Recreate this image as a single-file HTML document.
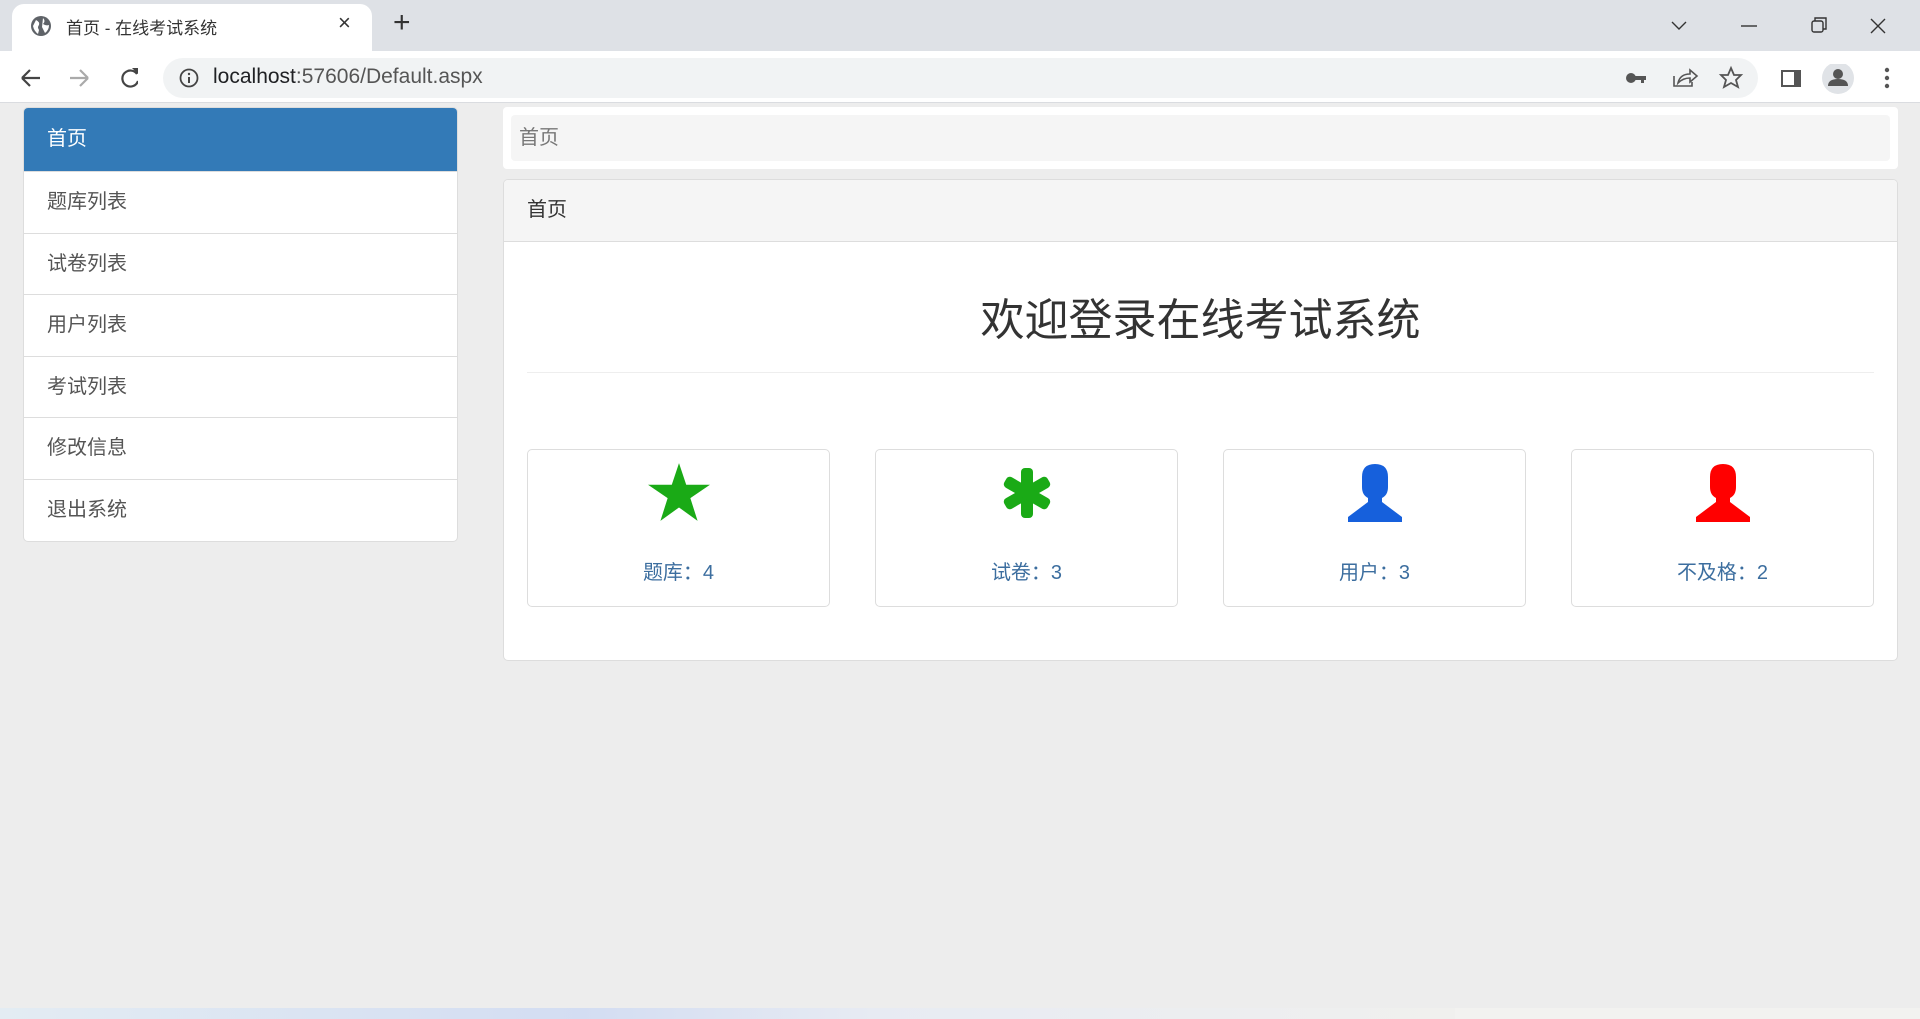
<!DOCTYPE html>
<html><head><meta charset="utf-8"><style>
*{margin:0;padding:0;box-sizing:border-box}
body{width:1920px;height:1019px;overflow:hidden;background:#ededed;font-family:"Liberation Sans","Noto Sans CJK SC",sans-serif;position:relative}
.abs{position:absolute}
.tabbar{left:0;top:0;width:1920px;height:51px;background:#dee1e6}
.tab{left:12px;top:4px;width:360px;height:47px;background:#fff;border-radius:12px 12px 0 0}
.toolbar{left:0;top:51px;width:1920px;height:52px;background:#fff;border-bottom:1px solid #dadce0}
.omni{left:163px;top:58px;width:1595px;height:40px;background:#f1f3f4;border-radius:20px}
.side{left:23px;top:107px;width:435px;background:#fff;border:1px solid #ddd;border-radius:5px;overflow:hidden}
.side div{height:61.6px;line-height:60px;padding-left:23px;font-size:20px;color:#555;border-top:1px solid #ddd}
.side div.act{background:#337ab7;color:#fff;border-top:none;height:63px;line-height:62px}
.bc{left:503px;top:107px;width:1395px;height:62px;background:#fff;border-radius:4px}
.bc div{position:absolute;left:8px;top:8px;right:8px;bottom:8px;background:#f5f5f5;border-radius:4px;font-size:20px;color:#777;line-height:46px;padding-left:8px}
.panel{left:503px;top:179px;width:1395px;height:482px;background:#fff;border:1px solid #ddd;border-radius:5px;overflow:hidden}
.ph{height:62px;background:#f5f5f5;border-bottom:1px solid #ddd;font-size:20px;color:#333;line-height:60px;padding-left:23px}
.card{top:449px;width:303px;height:158px;background:#fff;border:1px solid #ddd;border-radius:5px;text-align:center}
.card svg{position:absolute;left:50%;top:12px;transform:translateX(-50%)}
.card span{position:absolute;left:0;right:0;top:106px;font-size:20px;color:#3c6e9f}
</style></head><body>
<div class="abs tabbar"></div>
<div class="abs tab"></div>
<svg class="abs" style="left:30px;top:15px" width="22" height="22" viewBox="0 0 22 22"><circle cx="11" cy="11" r="10" fill="#5f6368"/><path d="M6 5 Q10 7 9 10 Q7 12 9 15 L8 19 Q4 16 3 11Z M13 3 Q16 6 13 9 Q16 11 19 10 Q19 15 15 18 Q13 14 12 12Z" fill="#fff"/></svg>
<div class="abs" style="left:66px;top:14px;font-size:17px;color:#333">首页 - 在线考试系统</div>
<div class="abs" style="left:338px;top:10px;font-size:22px;color:#333">×</div>
<div class="abs" style="left:393px;top:6px;font-size:30px;color:#333">+</div>
<svg class="abs" style="left:1670px;top:14px" width="220" height="24"><path d="M2 8 L9 15 L16 8" stroke="#333" fill="none" stroke-width="1.4"/><path d="M71 12 H87" stroke="#333" stroke-width="1.4"/><rect x="142" y="7" width="11" height="11" rx="2" stroke="#333" fill="none" stroke-width="1.4"/><path d="M145 7 V4 H156 V15 H153" stroke="#333" fill="none" stroke-width="1.4"/><path d="M211 5 L225 19 M225 5 L211 19" stroke="#333" stroke-width="1.4" transform="translate(-10,0)"/></svg>
<div class="abs toolbar"></div>
<svg class="abs" style="left:18px;top:64px" width="120" height="28"><path d="M4 14 H22 M4 14 L12 6 M4 14 L12 22" stroke="#444" stroke-width="2.2" fill="none"/><path d="M52 14 H70 M70 14 L62 6 M70 14 L62 22" stroke="#aaa" stroke-width="2.2" fill="none"/><path d="M119 10 A8 8 0 1 0 120 17" stroke="#444" stroke-width="2.2" fill="none"/><path d="M114 4 L121 4 L121 11Z" fill="#444"/></svg>
<div class="abs omni"></div>
<svg class="abs" style="left:178px;top:67px" width="22" height="22"><circle cx="11" cy="11" r="8.5" stroke="#444" stroke-width="1.8" fill="none"/><path d="M11 10 V16" stroke="#444" stroke-width="2"/><circle cx="11" cy="7" r="1.2" fill="#444"/></svg>
<div class="abs" style="left:213px;top:65px;font-size:21px;color:#202124">localhost<span style="color:#555">:57606/Default.aspx</span></div>
<svg class="abs" style="left:1620px;top:64px" width="300" height="30"><circle cx="11" cy="14" r="5" fill="#555"/><rect x="14" y="12" width="12" height="4" fill="#555"/><rect x="21" y="14" width="3" height="5" fill="#555"/><path d="M54 12 V22 H72 V18 M58 19 Q60 10 70 10 L70 6 L77 12 L70 18 L70 14 Q63 14 58 19Z" stroke="#555" stroke-width="1.6" fill="none"/><path d="M111 4 L114 11 L121 11 L116 16 L118 23 L111 19 L104 23 L106 16 L101 11 L108 11Z" stroke="#555" stroke-width="1.8" fill="none"/><rect x="161" y="6" width="20" height="17" fill="#555"/><rect x="163" y="8" width="11" height="13" fill="#fff"/><circle cx="218" cy="14" r="16" fill="#e0e3e7"/><circle cx="218" cy="10" r="5" fill="#555"/><path d="M208 22 Q208 15 218 15 Q228 15 228 22Z" fill="#555"/><circle cx="267" cy="6" r="2.2" fill="#555"/><circle cx="267" cy="14" r="2.2" fill="#555"/><circle cx="267" cy="22" r="2.2" fill="#555"/></svg>
<div class="abs side">
<div class="act">首页</div><div>题库列表</div><div>试卷列表</div><div>用户列表</div><div>考试列表</div><div>修改信息</div><div>退出系统</div>
</div>
<div class="abs bc"><div>首页</div></div>
<div class="abs panel"><div class="ph">首页</div>
<div style="position:absolute;left:0;right:0;top:104px;text-align:center;font-size:44px;color:#333">欢迎登录在线考试系统</div>
<div style="position:absolute;left:23px;right:23px;top:192px;border-top:1px solid #eee"></div>
</div>
<div class="abs card" style="left:527px"><svg width="64" height="62" viewBox="0 0 62 60"><path d="M31 1 L38 22 L61 22 L42 35 L49 57 L31 44 L13 57 L20 35 L1 22 L24 22Z" fill="#1aaa16"/></svg><span>题库：4</span></div>
<div class="abs card" style="left:875px"><svg width="62" height="62" viewBox="0 0 62 62"><g fill="#1aaa16" transform="translate(31,31)"><rect x="-6" y="-25" width="12" height="50" rx="4"/><rect x="-6" y="-25" width="12" height="50" rx="4" transform="rotate(60)"/><rect x="-6" y="-25" width="12" height="50" rx="4" transform="rotate(-60)"/></g></svg><span>试卷：3</span></div>
<div class="abs card" style="left:1223px"><svg width="62" height="62" viewBox="0 0 62 62"><path d="M31 2 Q44 2 44 15 V25 Q44 33 38 36 V40 L58 55 V60 H4 V55 L24 40 V36 Q18 33 18 25 V15 Q18 2 31 2Z" fill="#1660dc"/></svg><span>用户：3</span></div>
<div class="abs card" style="left:1571px"><svg width="62" height="62" viewBox="0 0 62 62"><path d="M31 2 Q44 2 44 15 V25 Q44 33 38 36 V40 L58 55 V60 H4 V55 L24 40 V36 Q18 33 18 25 V15 Q18 2 31 2Z" fill="#f00"/></svg><span>不及格：2</span></div>
<div class="abs" style="left:0;top:1008px;width:1455px;height:11px;background:linear-gradient(90deg,#e3ecf3,#d3ddf2 40%,#e7ebf3 60%,#f0f0ee)"></div>
<div class="abs" style="left:1455px;top:1008px;width:465px;height:11px;background:#f2f2f0"></div>
</body></html>
